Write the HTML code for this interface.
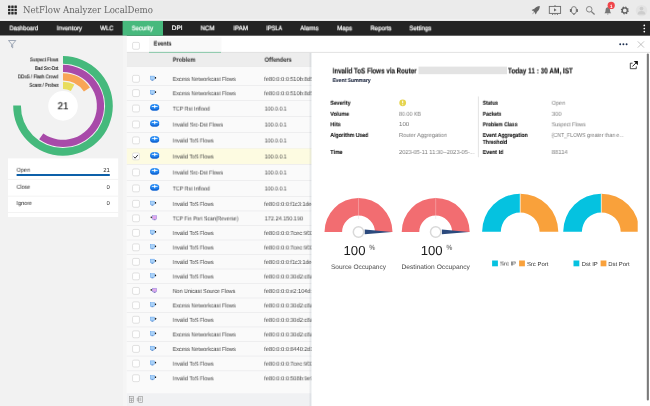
<!DOCTYPE html>
<html><head><meta charset="utf-8"><title>NetFlow Analyzer LocalDemo</title>
<style>
html,body{margin:0;padding:0;}
body{width:650px;height:406px;position:relative;overflow:hidden;background:#fff;font-family:'Liberation Sans',sans-serif;text-rendering:geometricPrecision;}
.t{position:absolute;will-change:transform;white-space:pre;line-height:12px;height:12px;transform-origin:0 50%;}
svg{position:absolute;left:0;top:0;overflow:hidden;}
</style></head><body>
<svg width="650" height="406" viewBox="0 0 650 406">
<rect x="0.00" y="0.00" width="650.00" height="19.70" fill="#ebebeb"/>
<rect x="0.00" y="20.90" width="650.00" height="14.80" fill="#242424"/>
<rect x="122.60" y="20.90" width="40.40" height="14.80" fill="#47b97d"/>
<rect x="0.00" y="35.70" width="123.00" height="371.00" fill="#f2f2f2"/>
<rect x="123.00" y="35.70" width="3.80" height="371.00" fill="#f5f5f5"/>
<rect x="8.05" y="5.60" width="2.4" height="2.4" rx="0.3" fill="#2b2b2b"/>
<rect x="11.25" y="5.60" width="2.4" height="2.4" rx="0.3" fill="#2b2b2b"/>
<rect x="14.45" y="5.60" width="2.4" height="2.4" rx="0.3" fill="#2b2b2b"/>
<rect x="8.05" y="8.80" width="2.4" height="2.4" rx="0.3" fill="#2b2b2b"/>
<rect x="11.25" y="8.80" width="2.4" height="2.4" rx="0.3" fill="#2b2b2b"/>
<rect x="14.45" y="8.80" width="2.4" height="2.4" rx="0.3" fill="#2b2b2b"/>
<rect x="8.05" y="12.00" width="2.4" height="2.4" rx="0.3" fill="#2b2b2b"/>
<rect x="11.25" y="12.00" width="2.4" height="2.4" rx="0.3" fill="#2b2b2b"/>
<rect x="14.45" y="12.00" width="2.4" height="2.4" rx="0.3" fill="#2b2b2b"/>
<g fill="#666"><path d="M539.8 6C537.4 6 535.2 7.3 534 9.5L533.3 10.9L535.1 12.7L536.500 12C538.700 10.800 539.900 8.500 539.800 6Z"/><path d="M534.9 8.400L531.600 10.100L533.300 11.300Z"/><path d="M537.400 10.900L535.800 14.500L534.600 12.600Z"/><path d="M533.500 12.100L531.900 14.400L534.100 12.900Z" opacity="0.55"/></g>
<g fill="none" stroke="#6a6a6a" stroke-width="0.9"><rect x="549.3" y="6.4" width="11.3" height="7"/><path d="M555 5v1.4M553 13.4l-0.6 1.600M557 13.400l0.600 1.600M555 13.400v1.400"/></g><path d="M554 8.300l2.600 1.600l-2.600 1.600z" fill="#6a6a6a"/>
<rect x="571.5" y="6.6" width="4.8" height="7.2" rx="2.4" fill="none" stroke="#707070" stroke-width="0.85"/><rect x="569.9" y="9" width="1.6" height="3" rx="0.5" fill="#666"/><rect x="576.3" y="9" width="1.6" height="3" rx="0.5" fill="#666"/><path d="M573 14.400h1.800" stroke="#707070" stroke-width="0.8"/>
<g fill="none" stroke="#7c7c7c" stroke-width="0.9"><circle cx="589.2" cy="9.3" r="2.8"/><path d="M591.3 11.500l3.300 3" stroke-width="1.2"/></g>
<path d="M604.4 13.200c1-0.800 1.100-2 1.200-3.400c0.100-1.600 1-2.600 2.200-2.600s2.100 1 2.200 2.600c0.100 1.400 0.200 2.600 1.200 3.400zM607 13.800h1.600a0.800 0.800 0 0 1-1.600 0z" fill="#777"/>
<circle cx="611.2" cy="5.4" r="3.6" fill="#f0454a"/>
<g fill="none" stroke="#5e5e5e"><circle cx="624.8" cy="10.4" r="2.5" stroke-width="1.3"/><circle cx="624.8" cy="10.4" r="3.4" stroke-width="1.2" stroke-dasharray="1.335 1.335"/></g>
<circle cx="641.5" cy="10.6" r="5.7" fill="#e3e3e3"/><circle cx="641.5" cy="8.600" r="1.900" fill="#cdcdcd"/><path d="M637.600 14.600c0-2.600 1.600-3.600 3.900-3.600s3.900 1 3.900 3.600z" fill="#cdcdcd"/>
<circle cx="644.3" cy="25.4" r="0.85" fill="#fff"/>
<circle cx="644.3" cy="28.5" r="0.85" fill="#fff"/>
<circle cx="644.3" cy="31.6" r="0.85" fill="#fff"/>
<path d="M8.500 40.500h7.300l-3.100 3.700v3.700l-1.100-0.900v-2.800z" fill="none" stroke="#8b97a8" stroke-width="0.8" stroke-linejoin="round"/>
<path d="M63.00 56.10A49.8 49.8 0 1 1 13.20 105.38L20.90 105.46A42.1 42.1 0 1 0 63.00 63.80Z" fill="#45b97c"/>
<path d="M63.00 64.80A41.1 41.1 0 1 1 39.13 139.36L43.31 133.50A33.9 33.9 0 1 0 63.00 72.00Z" fill="#a84aa9"/>
<path d="M63.00 73.20A32.7 32.7 0 0 1 89.95 87.38L83.93 91.51A25.4 25.4 0 0 0 63.00 80.50Z" fill="#f8a556"/>
<path d="M63.00 81.70A24.2 24.2 0 0 1 74.36 84.53L70.89 91.07A16.8 16.8 0 0 0 63.00 89.10Z" fill="#e8dd5e"/>
<circle cx="63" cy="105.9" r="14.8" fill="#fff"/>
<rect x="8.00" y="158.40" width="110.20" height="58.60" fill="#fff"/>
<rect x="8.00" y="178.90" width="110.20" height="0.80" fill="#f0f0f0"/>
<rect x="8.00" y="195.70" width="110.20" height="0.80" fill="#f0f0f0"/>
<rect x="8.00" y="212.20" width="110.20" height="0.80" fill="#f0f0f0"/>
<rect x="16.60" y="174.00" width="93.20" height="2.00" fill="#0d60a9"/>
<rect x="149.00" y="37.40" width="72.50" height="14.60" fill="#f9f9f9"/>
<rect x="126.80" y="51.90" width="523.20" height="1.00" fill="#e0e0e0"/>
<rect x="149.00" y="51.90" width="72.00" height="1.00" fill="#80c6a3"/>
<rect x="126.80" y="52.90" width="184.80" height="13.60" fill="#ededed"/>
<rect x="126.80" y="66.50" width="184.80" height="326.70" fill="#fafafa"/>
<rect x="126.80" y="66.10" width="184.80" height="0.60" fill="#e4e4e4"/>
<rect x="132.55" y="42.35" width="6.9" height="6.9" rx="1.4" fill="#fff" stroke="#d4d4d4" stroke-width="0.7"/>
<rect x="126.80" y="85.00" width="184.80" height="0.80" fill="#ebebed"/>
<rect x="132.55" y="75.35" width="6.9" height="6.9" rx="1.4" fill="#fff" stroke="#d4d4d4" stroke-width="0.7"/>
<rect x="150.25" y="76.10" width="4.4" height="3.6" fill="#a8d1f8" stroke="#5b9de8" stroke-width="0.45"/><rect x="151.4" y="79.90" width="2" height="0.8" fill="#4a80c8"/><path d="M154.6 77.80h0.8" stroke="#999" stroke-width="0.8"/><rect x="155" y="76.90" width="1.1" height="1.8" rx="0.4" fill="#111"/>
<rect x="126.80" y="100.20" width="184.80" height="0.80" fill="#ebebed"/>
<rect x="132.55" y="89.65" width="6.9" height="6.9" rx="1.4" fill="#fff" stroke="#d4d4d4" stroke-width="0.7"/>
<rect x="150.25" y="90.40" width="4.4" height="3.6" fill="#a8d1f8" stroke="#5b9de8" stroke-width="0.45"/><rect x="151.4" y="94.20" width="2" height="0.8" fill="#4a80c8"/><path d="M154.6 92.10h0.8" stroke="#999" stroke-width="0.8"/><rect x="155" y="91.20" width="1.1" height="1.8" rx="0.4" fill="#111"/>
<rect x="126.80" y="116.20" width="184.80" height="0.80" fill="#ebebed"/>
<rect x="132.55" y="105.05" width="6.9" height="6.9" rx="1.4" fill="#fff" stroke="#d4d4d4" stroke-width="0.7"/>
<ellipse cx="154.7" cy="108.50" rx="4.4" ry="2.3" fill="#1467d4"/><rect x="150.3" y="106.70" width="8.8" height="1.8" fill="#1467d4"/><ellipse cx="154.7" cy="106.50" rx="4.4" ry="2.5" fill="#2388f2"/><path d="M151.8 106.50h5.8M154.7 104.70v3.6" stroke="#fff" stroke-width="0.8"/><circle cx="154.7" cy="106.50" r="0.9" fill="#fff"/>
<rect x="126.80" y="132.10" width="184.80" height="0.80" fill="#ebebed"/>
<rect x="132.55" y="121.00" width="6.9" height="6.9" rx="1.4" fill="#fff" stroke="#d4d4d4" stroke-width="0.7"/>
<ellipse cx="154.7" cy="124.45" rx="4.4" ry="2.3" fill="#1467d4"/><rect x="150.3" y="122.65" width="8.8" height="1.8" fill="#1467d4"/><ellipse cx="154.7" cy="122.45" rx="4.4" ry="2.5" fill="#2388f2"/><path d="M151.8 122.45h5.8M154.7 120.65v3.6" stroke="#fff" stroke-width="0.8"/><circle cx="154.7" cy="122.45" r="0.9" fill="#fff"/>
<rect x="126.80" y="148.10" width="184.80" height="0.80" fill="#ebebed"/>
<rect x="132.55" y="136.95" width="6.9" height="6.9" rx="1.4" fill="#fff" stroke="#d4d4d4" stroke-width="0.7"/>
<ellipse cx="154.7" cy="140.40" rx="4.4" ry="2.3" fill="#1467d4"/><rect x="150.3" y="138.60" width="8.8" height="1.8" fill="#1467d4"/><ellipse cx="154.7" cy="138.40" rx="4.4" ry="2.5" fill="#2388f2"/><path d="M151.8 138.40h5.8M154.7 136.60v3.6" stroke="#fff" stroke-width="0.8"/><circle cx="154.7" cy="138.40" r="0.9" fill="#fff"/>
<rect x="126.80" y="148.50" width="184.80" height="16.00" fill="#fdfbe1"/>
<rect x="126.80" y="164.10" width="184.80" height="0.80" fill="#ebebed"/>
<rect x="132.55" y="152.95" width="6.9" height="6.9" rx="1.4" fill="#fff" stroke="#d4d4d4" stroke-width="0.7"/>
<path d="M133.6 156.60l1.5 1.600l2.800-3.300" fill="none" stroke="#222" stroke-width="0.9"/>
<ellipse cx="154.7" cy="156.40" rx="4.4" ry="2.3" fill="#1467d4"/><rect x="150.3" y="154.60" width="8.8" height="1.8" fill="#1467d4"/><ellipse cx="154.7" cy="154.40" rx="4.4" ry="2.5" fill="#2388f2"/><path d="M151.8 154.40h5.8M154.7 152.60v3.6" stroke="#fff" stroke-width="0.8"/><circle cx="154.7" cy="154.40" r="0.9" fill="#fff"/>
<rect x="126.80" y="180.10" width="184.80" height="0.80" fill="#ebebed"/>
<rect x="132.55" y="168.95" width="6.9" height="6.9" rx="1.4" fill="#fff" stroke="#d4d4d4" stroke-width="0.7"/>
<ellipse cx="154.7" cy="172.40" rx="4.4" ry="2.3" fill="#1467d4"/><rect x="150.3" y="170.60" width="8.8" height="1.8" fill="#1467d4"/><ellipse cx="154.7" cy="170.40" rx="4.4" ry="2.5" fill="#2388f2"/><path d="M151.8 170.40h5.8M154.7 168.60v3.6" stroke="#fff" stroke-width="0.8"/><circle cx="154.7" cy="170.40" r="0.9" fill="#fff"/>
<rect x="126.80" y="196.10" width="184.80" height="0.80" fill="#ebebed"/>
<rect x="132.55" y="184.95" width="6.9" height="6.9" rx="1.4" fill="#fff" stroke="#d4d4d4" stroke-width="0.7"/>
<ellipse cx="154.7" cy="188.40" rx="4.4" ry="2.3" fill="#1467d4"/><rect x="150.3" y="186.60" width="8.8" height="1.8" fill="#1467d4"/><ellipse cx="154.7" cy="186.40" rx="4.4" ry="2.5" fill="#2388f2"/><path d="M151.8 186.40h5.8M154.7 184.60v3.6" stroke="#fff" stroke-width="0.8"/><circle cx="154.7" cy="186.40" r="0.9" fill="#fff"/>
<rect x="126.80" y="210.50" width="184.80" height="0.80" fill="#ebebed"/>
<rect x="132.55" y="200.35" width="6.9" height="6.9" rx="1.4" fill="#fff" stroke="#d4d4d4" stroke-width="0.7"/>
<rect x="150.25" y="201.10" width="4.4" height="3.6" fill="#a8d1f8" stroke="#5b9de8" stroke-width="0.45"/><rect x="151.4" y="204.90" width="2" height="0.8" fill="#4a80c8"/><path d="M154.6 202.80h0.8" stroke="#999" stroke-width="0.8"/><rect x="155" y="201.90" width="1.1" height="1.8" rx="0.4" fill="#111"/>
<rect x="126.80" y="225.10" width="184.80" height="0.80" fill="#ebebed"/>
<rect x="132.55" y="214.85" width="6.9" height="6.9" rx="1.4" fill="#fff" stroke="#d4d4d4" stroke-width="0.7"/>
<rect x="152.35" y="215.60" width="4.4" height="3.6" fill="#e2a6ec" stroke="#8a8ade" stroke-width="0.45"/><rect x="153.6" y="219.40" width="2" height="0.8" fill="#7468b8"/><path d="M151.6 217.30h0.8" stroke="#999" stroke-width="0.8"/><rect x="150.7" y="216.40" width="1.1" height="1.8" rx="0.4" fill="#111"/>
<rect x="126.80" y="239.60" width="184.80" height="0.80" fill="#ebebed"/>
<rect x="132.55" y="229.40" width="6.9" height="6.9" rx="1.4" fill="#fff" stroke="#d4d4d4" stroke-width="0.7"/>
<rect x="150.25" y="230.15" width="4.4" height="3.6" fill="#a8d1f8" stroke="#5b9de8" stroke-width="0.45"/><rect x="151.4" y="233.95" width="2" height="0.8" fill="#4a80c8"/><path d="M154.6 231.85h0.8" stroke="#999" stroke-width="0.8"/><rect x="155" y="230.95" width="1.1" height="1.8" rx="0.4" fill="#111"/>
<rect x="126.80" y="254.10" width="184.80" height="0.80" fill="#ebebed"/>
<rect x="132.55" y="243.90" width="6.9" height="6.9" rx="1.4" fill="#fff" stroke="#d4d4d4" stroke-width="0.7"/>
<rect x="150.25" y="244.65" width="4.4" height="3.6" fill="#a8d1f8" stroke="#5b9de8" stroke-width="0.45"/><rect x="151.4" y="248.45" width="2" height="0.8" fill="#4a80c8"/><path d="M154.6 246.35h0.8" stroke="#999" stroke-width="0.8"/><rect x="155" y="245.45" width="1.1" height="1.8" rx="0.4" fill="#111"/>
<rect x="126.80" y="268.60" width="184.80" height="0.80" fill="#ebebed"/>
<rect x="132.55" y="258.40" width="6.9" height="6.9" rx="1.4" fill="#fff" stroke="#d4d4d4" stroke-width="0.7"/>
<rect x="150.25" y="259.15" width="4.4" height="3.6" fill="#a8d1f8" stroke="#5b9de8" stroke-width="0.45"/><rect x="151.4" y="262.95" width="2" height="0.8" fill="#4a80c8"/><path d="M154.6 260.85h0.8" stroke="#999" stroke-width="0.8"/><rect x="155" y="259.95" width="1.1" height="1.8" rx="0.4" fill="#111"/>
<rect x="126.80" y="283.20" width="184.80" height="0.80" fill="#ebebed"/>
<rect x="132.55" y="272.95" width="6.9" height="6.9" rx="1.4" fill="#fff" stroke="#d4d4d4" stroke-width="0.7"/>
<rect x="150.25" y="273.70" width="4.4" height="3.6" fill="#a8d1f8" stroke="#5b9de8" stroke-width="0.45"/><rect x="151.4" y="277.50" width="2" height="0.8" fill="#4a80c8"/><path d="M154.6 275.40h0.8" stroke="#999" stroke-width="0.8"/><rect x="155" y="274.50" width="1.1" height="1.8" rx="0.4" fill="#111"/>
<rect x="126.80" y="297.60" width="184.80" height="0.80" fill="#ebebed"/>
<rect x="132.55" y="287.45" width="6.9" height="6.9" rx="1.4" fill="#fff" stroke="#d4d4d4" stroke-width="0.7"/>
<rect x="152.35" y="288.20" width="4.4" height="3.6" fill="#e2a6ec" stroke="#8a8ade" stroke-width="0.45"/><rect x="153.6" y="292.00" width="2" height="0.8" fill="#7468b8"/><path d="M151.6 289.90h0.8" stroke="#999" stroke-width="0.8"/><rect x="150.7" y="289.00" width="1.1" height="1.8" rx="0.4" fill="#111"/>
<rect x="126.80" y="312.00" width="184.80" height="0.80" fill="#ebebed"/>
<rect x="132.55" y="301.85" width="6.9" height="6.9" rx="1.4" fill="#fff" stroke="#d4d4d4" stroke-width="0.7"/>
<rect x="150.25" y="302.60" width="4.4" height="3.6" fill="#a8d1f8" stroke="#5b9de8" stroke-width="0.45"/><rect x="151.4" y="306.40" width="2" height="0.8" fill="#4a80c8"/><path d="M154.6 304.30h0.8" stroke="#999" stroke-width="0.8"/><rect x="155" y="303.40" width="1.1" height="1.8" rx="0.4" fill="#111"/>
<rect x="126.80" y="326.50" width="184.80" height="0.80" fill="#ebebed"/>
<rect x="132.55" y="316.30" width="6.9" height="6.9" rx="1.4" fill="#fff" stroke="#d4d4d4" stroke-width="0.7"/>
<rect x="150.25" y="317.05" width="4.4" height="3.6" fill="#a8d1f8" stroke="#5b9de8" stroke-width="0.45"/><rect x="151.4" y="320.85" width="2" height="0.8" fill="#4a80c8"/><path d="M154.6 318.75h0.8" stroke="#999" stroke-width="0.8"/><rect x="155" y="317.85" width="1.1" height="1.8" rx="0.4" fill="#111"/>
<rect x="126.80" y="341.10" width="184.80" height="0.80" fill="#ebebed"/>
<rect x="132.55" y="330.85" width="6.9" height="6.9" rx="1.4" fill="#fff" stroke="#d4d4d4" stroke-width="0.7"/>
<rect x="150.25" y="331.60" width="4.4" height="3.6" fill="#a8d1f8" stroke="#5b9de8" stroke-width="0.45"/><rect x="151.4" y="335.40" width="2" height="0.8" fill="#4a80c8"/><path d="M154.6 333.30h0.8" stroke="#999" stroke-width="0.8"/><rect x="155" y="332.40" width="1.1" height="1.8" rx="0.4" fill="#111"/>
<rect x="126.80" y="355.70" width="184.80" height="0.80" fill="#ebebed"/>
<rect x="132.55" y="345.45" width="6.9" height="6.9" rx="1.4" fill="#fff" stroke="#d4d4d4" stroke-width="0.7"/>
<rect x="150.25" y="346.20" width="4.4" height="3.6" fill="#a8d1f8" stroke="#5b9de8" stroke-width="0.45"/><rect x="151.4" y="350.00" width="2" height="0.8" fill="#4a80c8"/><path d="M154.6 347.90h0.8" stroke="#999" stroke-width="0.8"/><rect x="155" y="347.00" width="1.1" height="1.8" rx="0.4" fill="#111"/>
<rect x="126.80" y="370.40" width="184.80" height="0.80" fill="#ebebed"/>
<rect x="132.55" y="360.10" width="6.9" height="6.9" rx="1.4" fill="#fff" stroke="#d4d4d4" stroke-width="0.7"/>
<rect x="150.25" y="360.85" width="4.4" height="3.6" fill="#a8d1f8" stroke="#5b9de8" stroke-width="0.45"/><rect x="151.4" y="364.65" width="2" height="0.8" fill="#4a80c8"/><path d="M154.6 362.55h0.8" stroke="#999" stroke-width="0.8"/><rect x="155" y="361.65" width="1.1" height="1.8" rx="0.4" fill="#111"/>
<rect x="132.55" y="374.75" width="6.9" height="6.9" rx="1.4" fill="#fff" stroke="#d4d4d4" stroke-width="0.7"/>
<rect x="150.25" y="375.50" width="4.4" height="3.6" fill="#a8d1f8" stroke="#5b9de8" stroke-width="0.45"/><rect x="151.4" y="379.30" width="2" height="0.8" fill="#4a80c8"/><path d="M154.6 377.20h0.8" stroke="#999" stroke-width="0.8"/><rect x="155" y="376.30" width="1.1" height="1.8" rx="0.4" fill="#111"/>
<rect x="126.80" y="393.20" width="184.80" height="13.00" fill="#f0f1f3"/>
<g fill="none" stroke="#949494" stroke-width="0.6"><rect x="129.5" y="396.3" width="4" height="6"/><path d="M129.5 398.300h4M129.500 400.300h4M131.500 398.300v4"/><rect x="138.8" y="396.300" width="3.8" height="6"/><path d="M137.300 398h1.500v2.800h-1.500zM140.700 397.500v3.600"/></g>
</svg>
<span class="t" style="left:609px;top:0px;color:#fff;font-family:'Liberation Sans', sans-serif;font-size:4.6px;font-weight:700;transform:translate(0.92px,0.50px) scaleX(1.0000);">1</span>
<span class="t" style="left:22px;top:5px;color:#666;font-family:'DejaVu Serif Condensed', 'DejaVu Serif', 'Liberation Serif', serif;font-size:9.5px;font-weight:400;transform:translate(0.90px,0.00px) scaleX(1.0070);">NetFlow Analyzer LocalDemo</span>
<span class="t" style="left:9px;top:23px;color:#fff;font-family:'Liberation Sans', sans-serif;font-size:6.4px;font-weight:400;transform:translate(0.50px,0.30px) scaleX(0.9147);-webkit-text-stroke:0.22px #fff;">Dashboard</span>
<span class="t" style="left:56px;top:23px;color:#fff;font-family:'Liberation Sans', sans-serif;font-size:6.4px;font-weight:400;transform:translate(0.70px,0.30px) scaleX(0.9621);-webkit-text-stroke:0.22px #fff;">Inventory</span>
<span class="t" style="left:100px;top:23px;color:#fff;font-family:'Liberation Sans', sans-serif;font-size:6.4px;font-weight:400;transform:translate(0.20px,0.30px) scaleX(0.9364);-webkit-text-stroke:0.22px #fff;">WLC</span>
<span class="t" style="left:131px;top:23px;color:#fff;font-family:'Liberation Sans', sans-serif;font-size:6.4px;font-weight:400;transform:translate(0.70px,0.30px) scaleX(0.9267);-webkit-text-stroke:0.22px #fff;">Security</span>
<span class="t" style="left:171px;top:23px;color:#fff;font-family:'Liberation Sans', sans-serif;font-size:6.4px;font-weight:400;transform:translate(0.80px,0.30px) scaleX(1.0135);-webkit-text-stroke:0.22px #fff;">DPI</span>
<span class="t" style="left:200px;top:23px;color:#fff;font-family:'Liberation Sans', sans-serif;font-size:6.4px;font-weight:400;transform:translate(0.60px,0.30px) scaleX(0.9614);-webkit-text-stroke:0.22px #fff;">NCM</span>
<span class="t" style="left:233px;top:23px;color:#fff;font-family:'Liberation Sans', sans-serif;font-size:6.4px;font-weight:400;transform:translate(0.40px,0.30px) scaleX(0.9699);-webkit-text-stroke:0.22px #fff;">IPAM</span>
<span class="t" style="left:266px;top:23px;color:#fff;font-family:'Liberation Sans', sans-serif;font-size:6.4px;font-weight:400;transform:translate(0.30px,0.30px) scaleX(0.8828);-webkit-text-stroke:0.22px #fff;">IPSLA</span>
<span class="t" style="left:300px;top:23px;color:#fff;font-family:'Liberation Sans', sans-serif;font-size:6.4px;font-weight:400;transform:translate(0.30px,0.30px) scaleX(0.9150);-webkit-text-stroke:0.22px #fff;">Alarms</span>
<span class="t" style="left:337px;top:23px;color:#fff;font-family:'Liberation Sans', sans-serif;font-size:6.4px;font-weight:400;transform:translate(0.20px,0.30px) scaleX(0.9463);-webkit-text-stroke:0.22px #fff;">Maps</span>
<span class="t" style="left:370px;top:23px;color:#fff;font-family:'Liberation Sans', sans-serif;font-size:6.4px;font-weight:400;transform:translate(0.50px,0.30px) scaleX(0.9334);-webkit-text-stroke:0.22px #fff;">Reports</span>
<span class="t" style="left:409px;top:23px;color:#fff;font-family:'Liberation Sans', sans-serif;font-size:6.4px;font-weight:400;transform:translate(0.40px,0.30px) scaleX(0.9483);-webkit-text-stroke:0.22px #fff;">Settings</span>
<span class="t" style="left:30px;top:54px;color:#1a1a1a;font-family:'Liberation Sans', sans-serif;font-size:5.3px;font-weight:400;transform:translate(0.10px,0.35px) scaleX(0.8243);-webkit-text-stroke:0.12px #1a1a1a;">Suspect Flows</span>
<span class="t" style="left:35px;top:62px;color:#1a1a1a;font-family:'Liberation Sans', sans-serif;font-size:5.3px;font-weight:400;transform:translate(0.00px,0.95px) scaleX(0.8228);-webkit-text-stroke:0.12px #1a1a1a;">Bad Src-Dst</span>
<span class="t" style="left:17px;top:71px;color:#1a1a1a;font-family:'Liberation Sans', sans-serif;font-size:5.3px;font-weight:400;transform:translate(0.90px,0.35px) scaleX(0.8409);-webkit-text-stroke:0.12px #1a1a1a;">DDoS / Flash Crowd</span>
<span class="t" style="left:29px;top:79px;color:#1a1a1a;font-family:'Liberation Sans', sans-serif;font-size:5.3px;font-weight:400;transform:translate(0.50px,0.85px) scaleX(0.8073);-webkit-text-stroke:0.12px #1a1a1a;">Scans / Probes</span>
<span class="t" style="left:57px;top:101px;color:#161616;font-family:'Liberation Sans', sans-serif;font-size:10.2px;font-weight:400;transform:translate(0.60px,0.30px) scaleX(0.9521);-webkit-text-stroke:0.15px #161616;">21</span>
<span class="t" style="left:16px;top:164px;color:#222;font-family:'Liberation Sans', sans-serif;font-size:5.9px;font-weight:400;transform:translate(0.60px,0.80px) scaleX(0.9291);">Open</span>
<span class="t" style="left:16px;top:181px;color:#222;font-family:'Liberation Sans', sans-serif;font-size:5.9px;font-weight:400;transform:translate(0.60px,0.80px) scaleX(0.9029);">Close</span>
<span class="t" style="left:16px;top:198px;color:#222;font-family:'Liberation Sans', sans-serif;font-size:5.9px;font-weight:400;transform:translate(0.60px,0.00px) scaleX(0.9100);">Ignore</span>
<span class="t" style="left:103px;top:164px;color:#222;font-family:'Liberation Sans', sans-serif;font-size:5.9px;font-weight:400;transform:translate(0.24px,0.80px) scaleX(1.0000);">21</span>
<span class="t" style="left:106px;top:181px;color:#222;font-family:'Liberation Sans', sans-serif;font-size:5.9px;font-weight:400;transform:translate(0.52px,0.80px) scaleX(1.0000);">0</span>
<span class="t" style="left:106px;top:198px;color:#222;font-family:'Liberation Sans', sans-serif;font-size:5.9px;font-weight:400;transform:translate(0.52px,0.00px) scaleX(1.0000);">0</span>
<span class="t" style="left:153px;top:38px;color:#111;font-family:'Liberation Sans', sans-serif;font-size:6.6px;font-weight:700;transform:translate(0.70px,0.60px) scaleX(0.8231);">Events</span>
<span class="t" style="left:172px;top:54px;color:#2a2a2a;font-family:'Liberation Sans', sans-serif;font-size:6.5px;font-weight:700;transform:translate(0.80px,0.80px) scaleX(0.8649);">Problem</span>
<span class="t" style="left:264px;top:54px;color:#2a2a2a;font-family:'Liberation Sans', sans-serif;font-size:6.5px;font-weight:700;transform:translate(0.60px,0.80px) scaleX(0.8859);">Offenders</span>
<span class="t" style="left:172px;top:73px;color:#404040;font-family:'Liberation Sans', sans-serif;font-size:5.9px;font-weight:400;transform:translate(0.80px,0.90px) scaleX(0.8992);">Excess Networkcast Flows</span>
<span class="t" style="left:264px;top:73px;color:#404040;font-family:'Liberation Sans', sans-serif;font-size:5.9px;font-weight:400;transform:translate(0.20px,0.90px) scaleX(0.9400);">fe80:0:0:0:510b:8d5c:91e2:77a1</span>
<span class="t" style="left:172px;top:88px;color:#404040;font-family:'Liberation Sans', sans-serif;font-size:5.9px;font-weight:400;transform:translate(0.80px,0.20px) scaleX(0.8992);">Excess Networkcast Flows</span>
<span class="t" style="left:264px;top:88px;color:#404040;font-family:'Liberation Sans', sans-serif;font-size:5.9px;font-weight:400;transform:translate(0.20px,0.20px) scaleX(0.9400);">fe80:0:0:0:510b:8d5c:91e2:77a1</span>
<span class="t" style="left:172px;top:103px;color:#404040;font-family:'Liberation Sans', sans-serif;font-size:5.9px;font-weight:400;transform:translate(0.80px,0.60px) scaleX(0.8919);">TCP Rst Inflood</span>
<span class="t" style="left:264px;top:103px;color:#404040;font-family:'Liberation Sans', sans-serif;font-size:5.9px;font-weight:400;transform:translate(0.80px,0.60px) scaleX(0.8910);">100.0.0.1</span>
<span class="t" style="left:172px;top:119px;color:#404040;font-family:'Liberation Sans', sans-serif;font-size:5.9px;font-weight:400;transform:translate(0.80px,0.55px) scaleX(0.9091);">Invalid Src-Dst Flows</span>
<span class="t" style="left:264px;top:119px;color:#404040;font-family:'Liberation Sans', sans-serif;font-size:5.9px;font-weight:400;transform:translate(0.80px,0.55px) scaleX(0.8910);">100.0.0.1</span>
<span class="t" style="left:172px;top:135px;color:#404040;font-family:'Liberation Sans', sans-serif;font-size:5.9px;font-weight:400;transform:translate(0.80px,0.50px) scaleX(0.8943);">Invalid ToS Flows</span>
<span class="t" style="left:264px;top:135px;color:#404040;font-family:'Liberation Sans', sans-serif;font-size:5.9px;font-weight:400;transform:translate(0.80px,0.50px) scaleX(0.8910);">100.0.0.1</span>
<span class="t" style="left:172px;top:151px;color:#404040;font-family:'Liberation Sans', sans-serif;font-size:5.9px;font-weight:400;transform:translate(0.80px,0.50px) scaleX(0.8943);">Invalid ToS Flows</span>
<span class="t" style="left:264px;top:151px;color:#404040;font-family:'Liberation Sans', sans-serif;font-size:5.9px;font-weight:400;transform:translate(0.80px,0.50px) scaleX(0.8910);">100.0.0.1</span>
<span class="t" style="left:172px;top:167px;color:#404040;font-family:'Liberation Sans', sans-serif;font-size:5.9px;font-weight:400;transform:translate(0.80px,0.50px) scaleX(0.9091);">Invalid Src-Dst Flows</span>
<span class="t" style="left:264px;top:167px;color:#404040;font-family:'Liberation Sans', sans-serif;font-size:5.9px;font-weight:400;transform:translate(0.80px,0.50px) scaleX(0.8910);">100.0.0.1</span>
<span class="t" style="left:172px;top:183px;color:#404040;font-family:'Liberation Sans', sans-serif;font-size:5.9px;font-weight:400;transform:translate(0.80px,0.50px) scaleX(0.8919);">TCP Rst Inflood</span>
<span class="t" style="left:264px;top:183px;color:#404040;font-family:'Liberation Sans', sans-serif;font-size:5.9px;font-weight:400;transform:translate(0.80px,0.50px) scaleX(0.8910);">100.0.0.1</span>
<span class="t" style="left:172px;top:198px;color:#404040;font-family:'Liberation Sans', sans-serif;font-size:5.9px;font-weight:400;transform:translate(0.80px,0.90px) scaleX(0.8943);">Invalid ToS Flows</span>
<span class="t" style="left:264px;top:198px;color:#404040;font-family:'Liberation Sans', sans-serif;font-size:5.9px;font-weight:400;transform:translate(0.20px,0.90px) scaleX(0.9400);">fe80:0:0:0:f1c3:1de4:5b2a:90cc</span>
<span class="t" style="left:172px;top:213px;color:#404040;font-family:'Liberation Sans', sans-serif;font-size:5.9px;font-weight:400;transform:translate(0.80px,0.40px) scaleX(0.8750);">TCP Fin Port Scan(Reverse)</span>
<span class="t" style="left:264px;top:213px;color:#404040;font-family:'Liberation Sans', sans-serif;font-size:5.9px;font-weight:400;transform:translate(0.80px,0.40px) scaleX(0.9328);">172.24.150.190</span>
<span class="t" style="left:172px;top:227px;color:#404040;font-family:'Liberation Sans', sans-serif;font-size:5.9px;font-weight:400;transform:translate(0.80px,0.95px) scaleX(0.8943);">Invalid ToS Flows</span>
<span class="t" style="left:264px;top:227px;color:#404040;font-family:'Liberation Sans', sans-serif;font-size:5.9px;font-weight:400;transform:translate(0.20px,0.95px) scaleX(0.9400);">fe80:0:0:0:7cec:9f33:1ab2:c4d0</span>
<span class="t" style="left:172px;top:242px;color:#404040;font-family:'Liberation Sans', sans-serif;font-size:5.9px;font-weight:400;transform:translate(0.80px,0.45px) scaleX(0.8943);">Invalid ToS Flows</span>
<span class="t" style="left:264px;top:242px;color:#404040;font-family:'Liberation Sans', sans-serif;font-size:5.9px;font-weight:400;transform:translate(0.20px,0.45px) scaleX(0.9400);">fe80:0:0:0:7cec:9f33:1ab2:c4d0</span>
<span class="t" style="left:172px;top:256px;color:#404040;font-family:'Liberation Sans', sans-serif;font-size:5.9px;font-weight:400;transform:translate(0.80px,0.95px) scaleX(0.8943);">Invalid ToS Flows</span>
<span class="t" style="left:264px;top:256px;color:#404040;font-family:'Liberation Sans', sans-serif;font-size:5.9px;font-weight:400;transform:translate(0.20px,0.95px) scaleX(0.9400);">fe80:0:0:0:f1c3:1de4:5b2a:90cc</span>
<span class="t" style="left:172px;top:271px;color:#404040;font-family:'Liberation Sans', sans-serif;font-size:5.9px;font-weight:400;transform:translate(0.80px,0.50px) scaleX(0.8943);">Invalid ToS Flows</span>
<span class="t" style="left:264px;top:271px;color:#404040;font-family:'Liberation Sans', sans-serif;font-size:5.9px;font-weight:400;transform:translate(0.20px,0.50px) scaleX(0.9400);">fe80:0:0:0:30d2:c8a7:6e01:22bf</span>
<span class="t" style="left:172px;top:286px;color:#404040;font-family:'Liberation Sans', sans-serif;font-size:5.9px;font-weight:400;transform:translate(0.80px,0.00px) scaleX(0.8991);">Non Unicast Source Flows</span>
<span class="t" style="left:264px;top:286px;color:#404040;font-family:'Liberation Sans', sans-serif;font-size:5.9px;font-weight:400;transform:translate(0.20px,0.00px) scaleX(0.9400);">fe80:0:0:0:e2:104d:7a3c:51ee</span>
<span class="t" style="left:172px;top:300px;color:#404040;font-family:'Liberation Sans', sans-serif;font-size:5.9px;font-weight:400;transform:translate(0.80px,0.40px) scaleX(0.8992);">Excess Networkcast Flows</span>
<span class="t" style="left:264px;top:300px;color:#404040;font-family:'Liberation Sans', sans-serif;font-size:5.9px;font-weight:400;transform:translate(0.20px,0.40px) scaleX(0.9400);">fe80:0:0:0:30d2:c8a7:6e01:22bf</span>
<span class="t" style="left:172px;top:314px;color:#404040;font-family:'Liberation Sans', sans-serif;font-size:5.9px;font-weight:400;transform:translate(0.80px,0.85px) scaleX(0.8943);">Invalid ToS Flows</span>
<span class="t" style="left:264px;top:314px;color:#404040;font-family:'Liberation Sans', sans-serif;font-size:5.9px;font-weight:400;transform:translate(0.20px,0.85px) scaleX(0.9400);">fe80:0:0:0:30d2:c8a7:6e01:22bf</span>
<span class="t" style="left:172px;top:329px;color:#404040;font-family:'Liberation Sans', sans-serif;font-size:5.9px;font-weight:400;transform:translate(0.80px,0.40px) scaleX(0.8992);">Excess Networkcast Flows</span>
<span class="t" style="left:264px;top:329px;color:#404040;font-family:'Liberation Sans', sans-serif;font-size:5.9px;font-weight:400;transform:translate(0.20px,0.40px) scaleX(0.9400);">fe80:0:0:0:30d2:c8a7:6e01:22bf</span>
<span class="t" style="left:172px;top:344px;color:#404040;font-family:'Liberation Sans', sans-serif;font-size:5.9px;font-weight:400;transform:translate(0.80px,0.00px) scaleX(0.8992);">Excess Networkcast Flows</span>
<span class="t" style="left:264px;top:344px;color:#404040;font-family:'Liberation Sans', sans-serif;font-size:5.9px;font-weight:400;transform:translate(0.20px,0.00px) scaleX(0.9400);">fe80:0:0:0:8440:2d19:c07b:e355</span>
<span class="t" style="left:172px;top:358px;color:#404040;font-family:'Liberation Sans', sans-serif;font-size:5.9px;font-weight:400;transform:translate(0.80px,0.65px) scaleX(0.8943);">Invalid ToS Flows</span>
<span class="t" style="left:264px;top:358px;color:#404040;font-family:'Liberation Sans', sans-serif;font-size:5.9px;font-weight:400;transform:translate(0.20px,0.65px) scaleX(0.9400);">fe80:0:0:0:7cec:9f33:1ab2:c4d0</span>
<span class="t" style="left:172px;top:373px;color:#404040;font-family:'Liberation Sans', sans-serif;font-size:5.9px;font-weight:400;transform:translate(0.80px,0.30px) scaleX(0.8943);">Invalid ToS Flows</span>
<span class="t" style="left:264px;top:373px;color:#404040;font-family:'Liberation Sans', sans-serif;font-size:5.9px;font-weight:400;transform:translate(0.20px,0.30px) scaleX(0.9400);">fe80:0:0:0:508b:9e94:d21f:0a6c</span>
<svg width="650" height="406" viewBox="0 0 650 406">
<defs><linearGradient id="sh" x1="0" x2="1" y1="0" y2="0"><stop offset="0" stop-color="#28405a" stop-opacity="0"/><stop offset="1" stop-color="#28405a" stop-opacity="0.13"/></linearGradient></defs>
<rect x="308.60" y="52.90" width="3.00" height="354.00" fill="url(#sh)"/>
<rect x="311.60" y="52.90" width="338.40" height="354.00" fill="#fff"/>
<rect x="646.8" y="53.4" width="2.1" height="347" rx="1" fill="#7a7a7a"/>
<circle cx="620.2" cy="44.2" r="0.95" fill="#1d3050"/>
<circle cx="623.4" cy="44.2" r="0.95" fill="#1d3050"/>
<circle cx="626.6" cy="44.2" r="0.95" fill="#1d3050"/>
<path d="M637.8 41.400l6.200 6.200M644 41.400l-6.200 6.200" stroke="#9a9a9a" stroke-width="0.6"/>
<path d="M632.6 63.200h-2.300v5.500h6v-2.300" fill="none" stroke="#222" stroke-width="0.8"/><path d="M632.400 66.500l3.600-3.600" stroke="#222" stroke-width="1"/><path d="M633.700 61h4.200v4.200z" fill="#111"/>
<rect x="418.50" y="66.60" width="88.50" height="7.60" fill="#e3e3e3"/>
<path d="M478.4 96.500v60.700" stroke="#dcdcdc" stroke-width="0.8"/>
<circle cx="402.7" cy="102.8" r="3.4" fill="#e6d44e"/><path d="M402.700 100.700v2.600M402.700 104.300v0.900" stroke="#fff" stroke-width="1"/>
<path d="M324.50 232.00A34 34 0 0 1 392.50 232.00L374.90 232.00A16.4 16.4 0 0 0 342.10 232.00Z" fill="#f26d71"/><path d="M358.5 197.7v18" stroke="#f9bfc0" stroke-width="0.5"/><path d="M358.5 215.7v3.3" stroke="#e2e2e2" stroke-width="0.5"/><path d="M364.7 229.6L391.8 232L364.7 234.3Z" fill="#2c4a7d"/><circle cx="358.5" cy="232" r="5.2" fill="#fff" stroke="#d9d9d9" stroke-width="1.5"/>
<path d="M401.70 232.00A34 34 0 0 1 469.70 232.00L452.10 232.00A16.4 16.4 0 0 0 419.30 232.00Z" fill="#f26d71"/><path d="M435.7 197.7v18" stroke="#f9bfc0" stroke-width="0.5"/><path d="M435.7 215.7v3.3" stroke="#e2e2e2" stroke-width="0.5"/><path d="M441.9 229.6L469.0 232L441.9 234.3Z" fill="#2c4a7d"/><circle cx="435.7" cy="232" r="5.2" fill="#fff" stroke="#d9d9d9" stroke-width="1.5"/>
<path d="M482.10 231.80A38.1 38.1 0 0 1 520.20 193.70L520.20 212.40A19.4 19.4 0 0 0 500.80 231.80Z" fill="#05c2e0"/><path d="M520.20 193.70A38.1 38.1 0 0 1 558.30 231.80L539.60 231.80A19.4 19.4 0 0 0 520.20 212.40Z" fill="#f9a13b"/><path d="M520.2 193.3v19.5" stroke="#fff" stroke-width="0.6"/>
<clipPath id="dc"><rect x="560" y="190" width="77.7" height="50"/></clipPath><g clip-path="url(#dc)"><path d="M563.20 231.80A38.1 38.1 0 0 1 601.30 193.70L601.30 212.40A19.4 19.4 0 0 0 581.90 231.80Z" fill="#05c2e0"/><path d="M601.30 193.70A38.1 38.1 0 0 1 639.40 231.80L620.70 231.80A19.4 19.4 0 0 0 601.30 212.40Z" fill="#f9a13b"/><path d="M601.3 193.3v19.5" stroke="#fff" stroke-width="0.6"/></g>
<rect x="492.10" y="260.50" width="5.80" height="5.80" fill="#05c2e0"/>
<rect x="519.10" y="260.50" width="5.80" height="5.80" fill="#f9a13b"/>
<rect x="573.50" y="260.50" width="5.80" height="5.80" fill="#05c2e0"/>
<rect x="600.60" y="260.50" width="5.80" height="5.80" fill="#f9a13b"/>
</svg>
<span class="t" style="left:332px;top:65px;color:#111;font-family:'Liberation Sans', sans-serif;font-size:7.8px;font-weight:700;transform:translate(0.60px,0.40px) scaleX(0.7957);-webkit-text-stroke:0.12px #111;">Invalid ToS Flows via Router</span>
<span class="t" style="left:507px;top:65px;color:#111;font-family:'Liberation Sans', sans-serif;font-size:7.8px;font-weight:700;transform:translate(0.90px,0.40px) scaleX(0.8243);-webkit-text-stroke:0.12px #111;">Today 11 : 30 AM, IST</span>
<span class="t" style="left:332px;top:75px;color:#17213a;font-family:'Liberation Sans', sans-serif;font-size:5.4px;font-weight:700;transform:translate(0.60px,0.00px) scaleX(0.9325);-webkit-text-stroke:0.08px #17213a;">Event Summary</span>
<span class="t" style="left:330px;top:97px;color:#161616;font-family:'Liberation Sans', sans-serif;font-size:5.9px;font-weight:700;transform:translate(0.30px,0.80px) scaleX(0.8763);-webkit-text-stroke:0.1px #161616;">Severity</span>
<span class="t" style="left:330px;top:108px;color:#161616;font-family:'Liberation Sans', sans-serif;font-size:5.9px;font-weight:700;transform:translate(0.30px,0.80px) scaleX(0.9019);-webkit-text-stroke:0.1px #161616;">Volume</span>
<span class="t" style="left:399px;top:108px;color:#777;font-family:'Liberation Sans', sans-serif;font-size:5.9px;font-weight:400;transform:translate(0.00px,0.80px) scaleX(0.9072);">80.00 KB</span>
<span class="t" style="left:330px;top:119px;color:#161616;font-family:'Liberation Sans', sans-serif;font-size:5.9px;font-weight:700;transform:translate(0.30px,0.30px) scaleX(0.9425);-webkit-text-stroke:0.1px #161616;">Hits</span>
<span class="t" style="left:399px;top:119px;color:#777;font-family:'Liberation Sans', sans-serif;font-size:5.9px;font-weight:400;transform:translate(0.00px,0.30px) scaleX(1.0463);">100</span>
<span class="t" style="left:330px;top:130px;color:#161616;font-family:'Liberation Sans', sans-serif;font-size:5.9px;font-weight:700;transform:translate(0.30px,0.00px) scaleX(0.8641);-webkit-text-stroke:0.1px #161616;">Algorithm Used</span>
<span class="t" style="left:399px;top:130px;color:#777;font-family:'Liberation Sans', sans-serif;font-size:5.9px;font-weight:400;transform:translate(0.00px,0.00px) scaleX(0.9455);">Router Aggregation</span>
<span class="t" style="left:330px;top:147px;color:#161616;font-family:'Liberation Sans', sans-serif;font-size:5.9px;font-weight:700;transform:translate(0.30px,0.00px) scaleX(0.9007);-webkit-text-stroke:0.1px #161616;">Time</span>
<span class="t" style="left:399px;top:147px;color:#777;font-family:'Liberation Sans', sans-serif;font-size:5.9px;font-weight:400;transform:translate(0.00px,0.00px) scaleX(0.9661);">2023-05-11 11:30--2023-05-...</span>
<span class="t" style="left:482px;top:97px;color:#161616;font-family:'Liberation Sans', sans-serif;font-size:5.9px;font-weight:700;transform:translate(0.70px,0.80px) scaleX(0.8493);-webkit-text-stroke:0.1px #161616;">Status</span>
<span class="t" style="left:551px;top:97px;color:#777;font-family:'Liberation Sans', sans-serif;font-size:5.9px;font-weight:400;transform:translate(0.70px,0.80px) scaleX(0.9291);">Open</span>
<span class="t" style="left:482px;top:108px;color:#161616;font-family:'Liberation Sans', sans-serif;font-size:5.9px;font-weight:700;transform:translate(0.70px,0.80px) scaleX(0.8393);-webkit-text-stroke:0.1px #161616;">Packets</span>
<span class="t" style="left:551px;top:108px;color:#777;font-family:'Liberation Sans', sans-serif;font-size:5.9px;font-weight:400;transform:translate(0.70px,0.80px) scaleX(0.9956);">300</span>
<span class="t" style="left:482px;top:119px;color:#161616;font-family:'Liberation Sans', sans-serif;font-size:5.9px;font-weight:700;transform:translate(0.70px,0.30px) scaleX(0.8501);-webkit-text-stroke:0.1px #161616;">Problem Class</span>
<span class="t" style="left:551px;top:119px;color:#777;font-family:'Liberation Sans', sans-serif;font-size:5.9px;font-weight:400;transform:translate(0.70px,0.30px) scaleX(0.8874);">Suspect Flows</span>
<span class="t" style="left:482px;top:130px;color:#161616;font-family:'Liberation Sans', sans-serif;font-size:5.9px;font-weight:700;transform:translate(0.70px,0.00px) scaleX(0.8628);-webkit-text-stroke:0.1px #161616;">Event Aggregation</span>
<span class="t" style="left:551px;top:130px;color:#777;font-family:'Liberation Sans', sans-serif;font-size:5.9px;font-weight:400;transform:translate(0.70px,0.00px) scaleX(0.8831);">{CNT_FLOWS greater than e...</span>
<span class="t" style="left:482px;top:136px;color:#161616;font-family:'Liberation Sans', sans-serif;font-size:5.9px;font-weight:700;transform:translate(0.70px,0.90px) scaleX(0.8636);-webkit-text-stroke:0.1px #161616;">Threshold</span>
<span class="t" style="left:482px;top:147px;color:#161616;font-family:'Liberation Sans', sans-serif;font-size:5.9px;font-weight:700;transform:translate(0.70px,0.00px) scaleX(0.8987);-webkit-text-stroke:0.1px #161616;">Event Id</span>
<span class="t" style="left:551px;top:147px;color:#777;font-family:'Liberation Sans', sans-serif;font-size:5.9px;font-weight:400;transform:translate(0.70px,0.00px) scaleX(0.9904);">88114</span>
<span class="t" style="left:343px;top:244px;color:#1c1c1c;font-family:'Liberation Sans', sans-serif;font-size:13px;font-weight:400;transform:translate(0.50px,0.90px) scaleX(1.0137);">100</span>
<span class="t" style="left:369px;top:241px;color:#333;font-family:'Liberation Sans', sans-serif;font-size:7.2px;font-weight:400;transform:translate(0.30px,0.80px) scaleX(0.8741);">%</span>
<span class="t" style="left:331px;top:262px;color:#444;font-family:'Liberation Sans', sans-serif;font-size:6.5px;font-weight:400;transform:translate(0.15px,0.00px) scaleX(0.9960);">Source Occupancy</span>
<span class="t" style="left:420px;top:244px;color:#1c1c1c;font-family:'Liberation Sans', sans-serif;font-size:13px;font-weight:400;transform:translate(0.70px,0.90px) scaleX(1.0137);">100</span>
<span class="t" style="left:446px;top:241px;color:#333;font-family:'Liberation Sans', sans-serif;font-size:7.2px;font-weight:400;transform:translate(0.50px,0.80px) scaleX(0.8741);">%</span>
<span class="t" style="left:401px;top:262px;color:#444;font-family:'Liberation Sans', sans-serif;font-size:6.5px;font-weight:400;transform:translate(0.45px,0.00px) scaleX(1.0248);">Destination Occupancy</span>
<span class="t" style="left:500px;top:258px;color:#333;font-family:'Liberation Sans', sans-serif;font-size:5.9px;font-weight:400;transform:translate(0.00px,0.50px) scaleX(0.9971);">Src IP</span>
<span class="t" style="left:526px;top:258px;color:#333;font-family:'Liberation Sans', sans-serif;font-size:5.9px;font-weight:400;transform:translate(0.90px,0.50px) scaleX(1.0056);">Src Port</span>
<span class="t" style="left:581px;top:258px;color:#333;font-family:'Liberation Sans', sans-serif;font-size:5.9px;font-weight:400;transform:translate(0.70px,0.50px) scaleX(1.0033);">Dst IP</span>
<span class="t" style="left:608px;top:258px;color:#333;font-family:'Liberation Sans', sans-serif;font-size:5.9px;font-weight:400;transform:translate(0.20px,0.50px) scaleX(1.0056);">Dst Port</span>
</body></html>
